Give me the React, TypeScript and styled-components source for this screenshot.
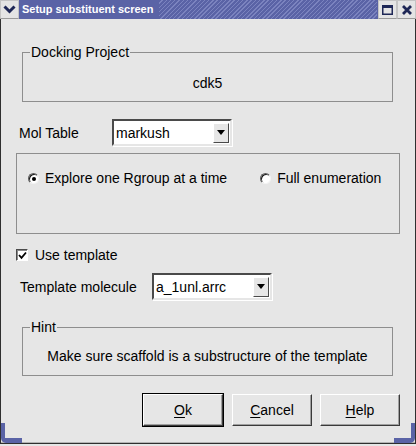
import { createGlobalStyle, styled } from 'styled-components';

const TITLE_BLUE = '#5a63a6';
const ICON_NAVY = '#1e2756';
const FRAME_GRAY = '#8e8e8e';

const GlobalStyle = createGlobalStyle`
  html, body {
    margin: 0;
    padding: 0;
    background: #e6e6e6;
  }
  body {
    font-family: 'Liberation Sans', Arial, sans-serif;
    font-size: 14px;
    color: #000;
  }
  * {
    box-sizing: border-box;
  }
`;

const Window = styled.div`
  position: relative;
  width: 416px;
  height: 444px;
  display: flex;
  flex-direction: column;
  background: #e6e6e6;
  border-left: 1px solid #2f2f2f;
  border-right: 1px solid #2f2f2f;
  border-bottom: 1px solid #2f2f2f;
  box-shadow: inset 0 -1px 0 #b4b4b4;
`;

const Corner = styled.div<{ $side: 'left' | 'right' }>`
  position: absolute;
  bottom: 0;
  ${({ $side }) => ($side === 'left' ? 'left: 0;' : 'right: 0;')}
  width: 21px;
  height: 20px;
  border-bottom: 5px solid ${TITLE_BLUE};
  ${({ $side }) =>
    $side === 'left'
      ? `border-left: 4px solid ${TITLE_BLUE}; border-bottom-left-radius: 5px;`
      : `border-right: 4px solid ${TITLE_BLUE}; border-bottom-right-radius: 5px;`}
`;

const TitleBar = styled.div`
  display: flex;
  height: 19px;
  margin: 0 -1px;
  background: ${TITLE_BLUE};
`;

const TitleButton = styled.div`
  display: flex;
  align-items: center;
  justify-content: center;
  width: 19px;
  height: 19px;
  background: #e4e4e4;
  border: 1px solid #c4c4c4;
  border-bottom-color: #9a9a9a;
`;

const TitleText = styled.div`
  padding: 0 6px 0 3px;
  line-height: 19px;
  font-size: 11px;
  font-weight: bold;
  color: #fff;
  white-space: nowrap;
`;

const Hatch = styled.div`
  flex: 1;
  margin-right: 1px;
  background: repeating-linear-gradient(
    135deg,
    ${TITLE_BLUE} 0px,
    ${TITLE_BLUE} 2px,
    #7b83bf 2px,
    #7b83bf 3px
  );
`;

const Content = styled.div`
  display: flex;
  flex-direction: column;
  flex: 1;
`;

const GroupBox = styled.div<{ $top: number; $height: number; $padTop: number }>`
  position: relative;
  height: ${({ $height }) => $height}px;
  margin: ${({ $top }) => $top}px 22px 0 21px;
  padding-top: ${({ $padTop }) => $padTop}px;
  border: 1px solid ${FRAME_GRAY};
  line-height: 16px;
  text-align: center;
`;

const Legend = styled.span`
  position: absolute;
  top: -9px;
  left: 7px;
  padding: 0 1px;
  line-height: 16px;
  background: #e6e6e6;
`;

const FieldRow = styled.div<{ $top: number; $left: number; $labelWidth: number }>`
  display: flex;
  align-items: center;
  height: 27px;
  margin-top: ${({ $top }) => $top}px;
  padding-left: ${({ $left }) => $left}px;

  & > label {
    width: ${({ $labelWidth }) => $labelWidth}px;
  }
`;

const Select = styled.div`
  display: flex;
  align-items: center;
  width: 120px;
  height: 27px;
  padding: 0 1px 0 2px;
  background: #fff;
  border: 2px solid;
  border-color: #4a4a4a #e6e6e6 #e6e6e6 #4a4a4a;
  box-shadow: 1px 1px 0 #fff;
`;

const SelectValue = styled.span`
  flex: 1;
`;

const ArrowButton = styled.div`
  display: flex;
  align-items: center;
  justify-content: center;
  width: 16px;
  height: 20px;
  background: #e6e6e6;
  border: 1px solid;
  border-color: #fff #4a4a4a #4a4a4a #fff;
`;

const RadioPanel = styled.div`
  display: flex;
  height: 81px;
  margin: 7px 15px 0 15px;
  padding: 16px 0 0 11px;
  border: 1px solid ${FRAME_GRAY};
`;

const RadioOption = styled.label<{ $width: number }>`
  display: flex;
  align-items: center;
  width: ${({ $width }) => $width}px;
  height: 16px;
  gap: 6px;
`;

const RadioDot = styled.span<{ $checked: boolean }>`
  position: relative;
  width: 11px;
  height: 11px;
  border-radius: 50%;
  background: #fff;
  border: 1px solid;
  border-color: #5a5a5a #f4f4f4 #f4f4f4 #5a5a5a;
  box-shadow: inset 1px 1px 0 #1a1a1a;

  &::after {
    content: '';
    display: ${({ $checked }) => ($checked ? 'block' : 'none')};
    position: absolute;
    left: 3px;
    top: 3px;
    width: 4px;
    height: 4px;
    border-radius: 50%;
    background: #000;
  }
`;

const CheckRow = styled.label`
  display: flex;
  align-items: center;
  gap: 7px;
  height: 16px;
  margin: 13px 0 0 15px;
`;

const CheckBox = styled.span`
  display: flex;
  align-items: center;
  justify-content: center;
  width: 12px;
  height: 12px;
  background: #fff;
  border: 1px solid;
  border-color: #4a4a4a #fff #fff #4a4a4a;
  box-shadow: inset 1px 1px 0 #8a8a8a;
`;

const ButtonRow = styled.div`
  display: flex;
  justify-content: flex-end;
  align-items: center;
  gap: 8px;
  margin: 17px 15px 0 0;
`;

const Button = styled.button<{ $default?: boolean }>`
  width: ${({ $default }) => ($default ? 82 : 80)}px;
  height: ${({ $default }) => ($default ? 34 : 32)}px;
  padding: 0;
  font-family: inherit;
  font-size: 14px;
  color: #000;
  background: #e6e6e6;
  border: 1px solid;
  border-color: #fff #3a3a3a #3a3a3a #fff;
  box-shadow: inset -1px -1px 0 #a0a0a0;
  ${({ $default }) => ($default ? 'outline: 1px solid #000; outline-offset: -1px; border-width: 2px;' : '')}

  & u {
    text-decoration-thickness: 1px;
    text-underline-offset: 2px;
  }
`;

const Chevron = () => (
  <svg width="13" height="9" viewBox="0 0 13 9">
    <path d="M1.5 1.5 L6.5 6.5 L11.5 1.5" fill="none" stroke={ICON_NAVY} strokeWidth="3" />
  </svg>
);

const MaximizeIcon = () => (
  <svg width="11" height="10" viewBox="0 0 11 10">
    <rect x="0.75" y="0.75" width="9.5" height="8.5" fill="none" stroke={ICON_NAVY} strokeWidth="1.5" />
    <rect x="0" y="0" width="11" height="3" fill={ICON_NAVY} />
  </svg>
);

const CloseIcon = () => (
  <svg width="10" height="10" viewBox="0 0 10 10">
    <path d="M1 1 L9 9 M9 1 L1 9" stroke={ICON_NAVY} strokeWidth="2.8" />
  </svg>
);

const DownArrow = () => (
  <svg width="8" height="5" viewBox="0 0 8 5">
    <path d="M0 0 H8 L4 5 Z" fill="#000" />
  </svg>
);

const CheckMark = () => (
  <svg width="9" height="9" viewBox="0 0 9 9">
    <path d="M1 4 L3.5 6.8 L8 1.5" fill="none" stroke="#000" strokeWidth="1.8" />
  </svg>
);

const App = () => {
  return (
    <>
      <GlobalStyle />
      <Window>
        <TitleBar>
          <TitleButton>
            <Chevron />
          </TitleButton>
          <TitleText>Setup substituent screen</TitleText>
          <Hatch />
          <TitleButton>
            <MaximizeIcon />
          </TitleButton>
          <TitleButton>
            <CloseIcon />
          </TitleButton>
        </TitleBar>
        <Content>
          <GroupBox $top={33} $height={50} $padTop={22}>
            <Legend>Docking Project</Legend>
            cdk5
          </GroupBox>
          <FieldRow $top={17} $left={18} $labelWidth={93}>
            <label>Mol Table</label>
            <Select>
              <SelectValue>markush</SelectValue>
              <ArrowButton>
                <DownArrow />
              </ArrowButton>
            </Select>
          </FieldRow>
          <RadioPanel>
            <RadioOption $width={234}>
              <RadioDot $checked />
              Explore one Rgroup at a time
            </RadioOption>
            <RadioOption $width={140}>
              <RadioDot $checked={false} />
              Full enumeration
            </RadioOption>
          </RadioPanel>
          <CheckRow>
            <CheckBox>
              <CheckMark />
            </CheckBox>
            Use template
          </CheckRow>
          <FieldRow $top={10} $left={19} $labelWidth={132}>
            <label>Template molecule</label>
            <Select>
              <SelectValue>a_1unl.arrc</SelectValue>
              <ArrowButton>
                <DownArrow />
              </ArrowButton>
            </Select>
          </FieldRow>
          <GroupBox $top={27} $height={49} $padTop={20}>
            <Legend>Hint</Legend>
            Make sure scaffold is a substructure of the template
          </GroupBox>
          <ButtonRow>
            <Button $default>
              <u>O</u>k
            </Button>
            <Button>
              <u>C</u>ancel
            </Button>
            <Button>
              <u>H</u>elp
            </Button>
          </ButtonRow>
        </Content>
        <Corner $side="left" />
        <Corner $side="right" />
      </Window>
    </>
  );
};

export default App;
